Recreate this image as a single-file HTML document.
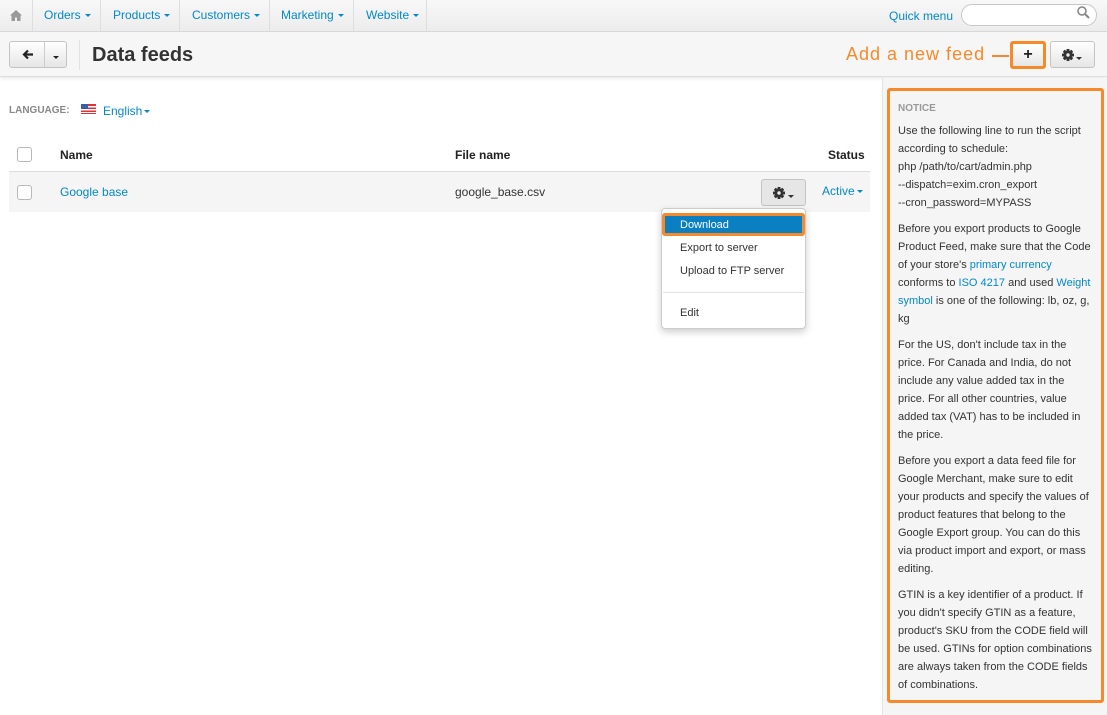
<!DOCTYPE html>
<html><head><meta charset="utf-8"><style>
*{box-sizing:border-box;margin:0;padding:0}
body{width:1107px;height:715px;overflow:hidden;font-family:"Liberation Sans",Arial,sans-serif;font-size:12px;color:#333;background:#fff;position:relative}
a{color:#0388cc;text-decoration:none}
.nav{position:absolute;left:0;top:0;width:1107px;height:32px;background:linear-gradient(#f8f8f8,#ececec);border-bottom:1px solid #d8d8d8}
.nav .it{position:absolute;top:0;height:31px;line-height:31px;color:#0388cc;font-size:12px;border-right:1px solid #dedede}
.caret{display:inline-block;width:0;height:0;border-left:3px solid transparent;border-right:3px solid transparent;border-top:3px solid currentColor;vertical-align:middle;margin-left:4px}
.bar{position:absolute;left:0;top:32px;width:1107px;height:45px;background:#f6f6f6;border-bottom:1px solid #ddd;box-shadow:0 2px 3px rgba(0,0,0,.08)}
.btn{position:absolute;background:linear-gradient(#fff,#e6e6e6);border:1px solid #c4c4c4;border-radius:3px}
.side{position:absolute;left:882px;top:78px;width:225px;height:637px;background:#f5f5f5;border-left:1px solid #e4e4e4}
.notice{position:absolute;left:887px;top:88px;width:217px;height:615px;border:3px solid #f68a2a;border-radius:3px;background:#f5f5f5;padding:11px 0 0 8px;font-size:11px;line-height:18px;color:#333}
.notice p{margin-bottom:8px}
.cb{position:absolute;width:15px;height:15px;border:1px solid #b8b8b8;border-radius:3px;background:#fff}
.dd{position:absolute;left:661px;top:208px;width:145px;height:121px;background:#fff;border:1px solid #ccc;border-radius:4px;box-shadow:0 3px 8px rgba(0,0,0,.2)}
.dd div{position:absolute;left:18px;font-size:11px;color:#333}
.gear{position:absolute}
</style></head><body>
<svg width="0" height="0" style="position:absolute"><defs><g id="g"><g fill="#333"><rect x="4.5" y="0" width="3" height="12" rx=".5"/><rect x="0" y="4.5" width="12" height="3" rx=".5"/><rect x="4.5" y="0" width="3" height="12" rx=".5" transform="rotate(45 6 6)"/><rect x="4.5" y="0" width="3" height="12" rx=".5" transform="rotate(-45 6 6)"/><circle cx="6" cy="6" r="4.3"/></g><circle cx="6" cy="6" r="1.7" fill="#eee"/></g></defs></svg>
<div class="nav">
 <div class="it" style="left:0;width:33px;text-align:center;color:#999"><svg width="12" height="11" viewBox="0 0 12 11" style="vertical-align:middle"><path d="M6 0L0 5.5h1.5V11h3.5V7.5h2V11h3.5V5.5H12z" fill="#999"/></svg></div>
 <div class="it" style="left:33px;width:68px;padding-left:11px">Orders<span class="caret"></span></div>
 <div class="it" style="left:101px;width:79px;padding-left:12px">Products<span class="caret"></span></div>
 <div class="it" style="left:180px;width:90px;padding-left:12px">Customers<span class="caret"></span></div>
 <div class="it" style="left:270px;width:84px;padding-left:11px">Marketing<span class="caret"></span></div>
 <div class="it" style="left:354px;width:73px;padding-left:12px">Website<span class="caret"></span></div>
 <div style="position:absolute;left:889px;top:0;line-height:32px;color:#0388cc">Quick menu</div>
 <div style="position:absolute;left:961px;top:4px;width:136px;height:22px;border:1px solid #c8c8c8;border-radius:11px;background:#fff"></div>
 <svg style="position:absolute;left:1077px;top:6px" width="13" height="13" viewBox="0 0 13 13"><circle cx="5" cy="5" r="4" stroke="#888" stroke-width="1.6" fill="none"/><path d="M8 8l4 4" stroke="#888" stroke-width="2"/></svg>
</div>
<div class="bar">
 <div class="btn" style="left:9px;top:9px;width:58px;height:27px"></div>
 <div style="position:absolute;left:44px;top:10px;width:1px;height:25px;background:#ccc"></div>
 <svg style="position:absolute;left:22px;top:17px" width="12" height="11" viewBox="0 0 12 11"><path d="M11 5.5H3M6 1.5L2 5.5l4 4" stroke="#222" stroke-width="2.2" fill="none"/></svg>
 <div style="position:absolute;left:53px;top:18px;color:#222"><span class="caret" style="margin:0"></span></div>
 <div style="position:absolute;left:79px;top:8px;width:1px;height:30px;background:#e2e2e2"></div>
 <div style="position:absolute;left:92px;top:12px;font-size:20px;font-weight:bold;color:#333">Data feeds</div>
 <div style="position:absolute;left:846px;top:12px;font-size:18px;color:#f68a2a;letter-spacing:1px">Add a new feed</div>
 <div style="position:absolute;left:992px;top:23px;width:17px;height:2px;background:#f68a2a"></div>
 <div class="btn" style="left:1010px;top:9px;width:36px;height:28px;border:3px solid #f68a2a"></div>
 <div style="position:absolute;left:1010px;top:9px;width:36px;height:28px;text-align:center;line-height:28px;font-weight:bold;font-size:16px;color:#222">+</div>
 <div class="btn" style="left:1050px;top:9px;width:45px;height:27px"></div>
 <svg class="gear" style="left:1062px;top:17px" width="12" height="12"><use href="#g"/></svg>
 <div style="position:absolute;left:1076px;top:19px;color:#333"><span class="caret" style="margin:0"></span></div>
</div>
<div style="position:absolute;left:9px;top:105px;font-size:10px;font-weight:bold;color:#888">LANGUAGE:</div>
<svg style="position:absolute;left:81px;top:104px" width="15" height="10"><rect width="15" height="10" fill="#d33"/><rect y="2" width="15" height="1.5" fill="#fff"/><rect y="5" width="15" height="1.5" fill="#fff"/><rect y="8" width="15" height="1" fill="#fff"/><rect width="7" height="5" fill="#3a5ea8"/></svg>
<div style="position:absolute;left:103px;top:104px;color:#0388cc">English<span class="caret" style="margin-left:2px"></span></div>
<div class="cb" style="left:17px;top:147px"></div>
<div style="position:absolute;left:60px;top:148px;font-weight:bold;color:#222">Name</div>
<div style="position:absolute;left:455px;top:148px;font-weight:bold;color:#222">File name</div>
<div style="position:absolute;left:828px;top:148px;font-weight:bold;color:#222">Status</div>
<div style="position:absolute;left:9px;top:171px;width:861px;height:41px;background:#f5f5f5;border-top:1px solid #ddd"></div>
<div class="cb" style="left:17px;top:185px"></div>
<div style="position:absolute;left:60px;top:185px;color:#0388cc">Google base</div>
<div style="position:absolute;left:455px;top:185px">google_base.csv</div>
<div class="btn" style="left:761px;top:179px;width:45px;height:27px;background:#e6e6e6"></div>
<svg class="gear" style="left:773px;top:187px" width="12" height="12"><use href="#g"/></svg>
<div style="position:absolute;left:788px;top:189px;color:#333"><span class="caret" style="margin:0"></span></div>
<div style="position:absolute;left:822px;top:184px;color:#0388cc">Active<span class="caret" style="margin-left:2px"></span></div>
<div class="dd">
 <div style="left:0;top:4px;width:143px;height:23px;background:#0a7fc2;border:3px solid #f68a2a;border-radius:3px"></div>
 <div style="top:10px;color:#fff">Download</div>
 <div style="top:33px">Export to server</div>
 <div style="top:56px">Upload to FTP server</div>
 <div style="left:1px;top:83px;width:141px;height:1px;background:#e2e2e2"></div>
 <div style="top:98px">Edit</div>
</div>
<div class="side"></div>
<div class="notice">
 <div style="font-size:10px;font-weight:bold;color:#999;margin-bottom:6px;line-height:14px">NOTICE</div>
 <p>Use the following line to run the script<br>according to schedule:<br>php /path/to/cart/admin.php<br>--dispatch=exim.cron_export<br>--cron_password=MYPASS</p>
 <p>Before you export products to Google<br>Product Feed, make sure that the Code<br>of your store's <a>primary currency</a><br>conforms to <a>ISO 4217</a> and used <a>Weight</a><br><a>symbol</a> is one of the following: lb, oz, g,<br>kg</p>
 <p>For the US, don't include tax in the<br>price. For Canada and India, do not<br>include any value added tax in the<br>price. For all other countries, value<br>added tax (VAT) has to be included in<br>the price.</p>
 <p>Before you export a data feed file for<br>Google Merchant, make sure to edit<br>your products and specify the values of<br>product features that belong to the<br>Google Export group. You can do this<br>via product import and export, or mass<br>editing.</p>
 <p>GTIN is a key identifier of a product. If<br>you didn't specify GTIN as a feature,<br>product's SKU from the CODE field will<br>be used. GTINs for option combinations<br>are always taken from the CODE fields<br>of combinations.</p>
</div>
</body></html>
